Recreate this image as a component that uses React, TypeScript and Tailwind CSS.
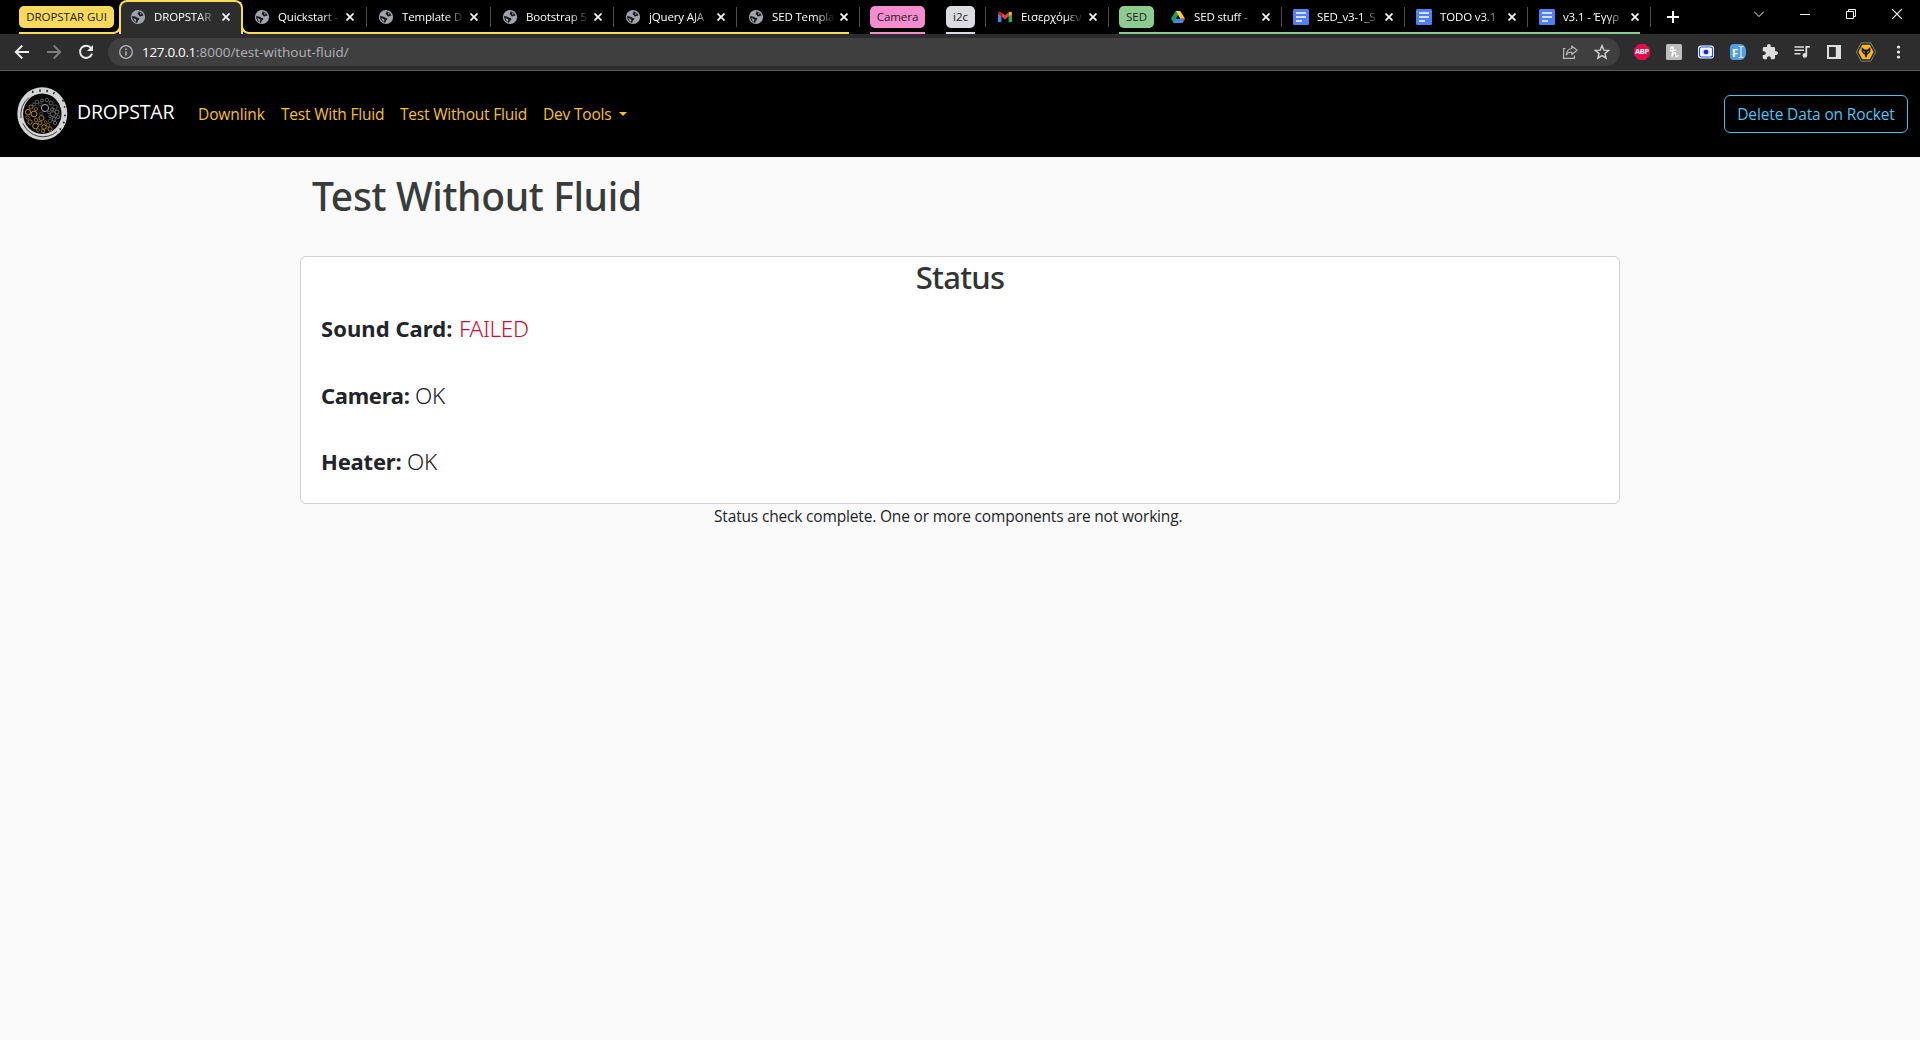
import type { ReactNode } from "react";

function Globe() {
  return (
    <svg viewBox="0 0 16 16" className="h-4 w-4 shrink-0">
      <circle cx="8" cy="8" r="7.1" fill="#a1a5ab" />
      <path d="M2.2 6.8 C3.6 7.8 5.4 7.3 6.6 8.2 C7.6 9.1 8.8 8.6 9.3 9.6 C9.6 10.6 8.3 11.3 7.6 12.2 L7.2 13.9 C4.2 13.5 1.8 10.6 2.2 6.8 Z" fill="#15161a" />
      <path d="M3.4 9.2 C5 9.100 6.200 10.200 6.500 11.100 L5.700 12.800 C4.500 12 3.600 10.800 3.400 9.200Z" fill="#a1a5ab" />
      <path d="M8.4 2.4 C10.6 2.6 12.6 4 13.4 6.2 C12.6 7.2 11.8 6.4 10.9 7.2 C9.8 7.9 8.7 7.1 9.1 6.1 C8.1 5.7 7.2 5.4 7.7 4.5 C8.8 4.3 8.1 3.3 8.4 2.4 Z" fill="#15161a" />
      <path d="M9.9 3.500 L12 5 L10.4 5.700 Z" fill="#a1a5ab" />
    </svg>
  );
}

function Gmail() {
  return (
    <svg viewBox="0 0 16 16" className="h-4 w-4 shrink-0">
      <path d="M1 4v8.3c0 .5.4.9.9.9h2.5V6.6Z" fill="#4285f4" />
      <path d="M15 4v8.3c0 .5-.4.9-.9.9h-2.5V6.6Z" fill="#34a853" />
      <path d="M11.6 3.6v4l3.4-2.5V4.2c0-1.5-1.7-1.9-2.5-1.3Z" fill="#fbbc04" />
      <path d="M4.4 7.6v-4L8 6.3l3.6-2.7v4L8 10.4Z" fill="#ea4335" />
      <path d="M1 4.2v.9l3.4 2.5v-4l-.9-.7C2.600 2.300 1 2.800 1 4.200Z" fill="#c5221f" />
    </svg>
  );
}

function Drive() {
  return (
    <svg viewBox="0 0 16 16" className="h-4 w-4 shrink-0">
      <path d="M5.600 2 L8.100 6.200 L3.700 14 L1 9.800Z" fill="#17a05d" />
      <path d="M5.600 2 H10.300 L15 9.800 H10.200Z" fill="#ffcd40" />
      <path d="M5.400 9.800 H15 L12.600 14 H3.300Z" fill="#4587f4" />
      <path d="M12.200 9.800 H15 L13.600 12.300Z" fill="#ea4335" />
      <path d="M8.100 6.200 L10.200 9.800 H6Z" fill="#0b0b0b" />
    </svg>
  );
}

function Docs() {
  return (
    <svg viewBox="0 0 16 16" className="h-4 w-4 shrink-0">
      <rect width="16" height="16" rx="1.500" fill="#4f80f5" />
      <path d="M3 4h10M3 8h10M3 12h6" stroke="#fff" strokeWidth="1.700" />
    </svg>
  );
}

function TabBody({ icon, title }: { icon: ReactNode; title: string }) {
  return (
    <>
      {icon}
      <span className="ml-2 w-[62px] overflow-hidden whitespace-nowrap text-[11.5px] leading-4 tracking-[-0.15px] text-white [mask-image:linear-gradient(to_right,black_44px,transparent_63px)]">
        {title}
      </span>
      <svg viewBox="0 0 8 8" className="ml-1.5 h-2 w-2 shrink-0">
        <path d="M0.500 0.500 7.500 7.500M7.500 0.500 0.500 7.500" stroke="#f4f4f4" strokeWidth="1.800" />
      </svg>
    </>
  );
}

function Separator() {
  return <span className="h-5 w-px shrink-0 bg-[#4c4c4c]" />;
}

function Tab({ icon, title, sep = true, wide = false }: { icon: ReactNode; title: string; sep?: boolean; wide?: boolean }) {
  return (
    <div className={`flex h-[34px] shrink-0 items-center ${wide ? "w-[124px]" : "w-[123px]"}`}>
      {sep ? <Separator /> : <span className="w-px" />}
      <span className="w-[11px] shrink-0" />
      <TabBody icon={icon} title={title} />
    </div>
  );
}

function Chip({ label, className }: { label: string; className: string }) {
  return (
    <span className={`flex h-[22px] shrink-0 items-center justify-center rounded-[5px] text-[11.5px] leading-4 tracking-[-0.05px] text-[#202124] ${className}`}>
      {label}
    </span>
  );
}

function TabStrip() {
  return (
    <div className="flex h-[34px] bg-black pl-[19px]">
      <div className="flex w-[100px] shrink-0 flex-col">
        <div className="flex h-8 items-start pt-1.5">
          <Chip label="DROPSTAR GUI" className="w-[95px] bg-[#f9d95c]" />
        </div>
        <div className="h-0.5 w-[95px] bg-[#f9dc5c]" />
      </div>

      <div className="relative z-10 -mr-px flex h-[34px] w-[124px] shrink-0 items-center rounded-t-lg border-2 border-b-0 border-[#f9dc5c] bg-[#2d2d2d] pb-0.5 pl-[9px]">
        <span className="absolute -left-2 bottom-0 h-2 w-2 rounded-br-lg border-b-2 border-r-2 border-[#f9dc5c]" />
        <span className="absolute -right-2 bottom-0 h-2 w-2 rounded-bl-lg border-b-2 border-l-2 border-[#f9dc5c]" />
        <TabBody icon={<Globe />} title="DROPSTAR" />
      </div>

      <div className="flex shrink-0 flex-col">
        <div className="flex h-8">
          <Tab icon={<Globe />} title="Quickstart -" sep={false} wide />
          <Tab icon={<Globe />} title="Template D" wide />
          <Tab icon={<Globe />} title="Bootstrap 5" />
          <Tab icon={<Globe />} title="jQuery AJA" />
          <Tab icon={<Globe />} title="SED Templa" />
        </div>
        <div className="ml-1.5 mr-2.5 h-0.5 bg-[#f9dc5c]" />
      </div>

      <div className="flex h-[34px] shrink-0">
        <div className="flex items-center"><Separator /></div>
        <div className="ml-2.5 flex flex-col justify-between pt-1.5">
          <Chip label="Camera" className="w-[55px] bg-[#f68cd0]" />
          <div className="h-0.5 bg-[#f68cd0]" />
        </div>
        <div className="ml-[21px] mr-2.5 flex flex-col justify-between pt-1.5">
          <Chip label="i2c" className="w-[29px] bg-[#dadce0]" />
          <div className="h-0.5 bg-[#dadce0]" />
        </div>
        <Tab icon={<Gmail />} title="Εισερχόμεν" />
        <div className="flex items-center"><Separator /></div>
      </div>

      <div className="ml-2.5 flex shrink-0 flex-col">
        <div className="flex h-8">
          <div className="flex w-[39px] items-start pt-1.5">
            <Chip label="SED" className="w-[35px] bg-[#8ccd8f]" />
          </div>
          <Tab icon={<Drive />} title="SED stuff -" sep={false} />
          <Tab icon={<Docs />} title="SED_v3-1_S" />
          <Tab icon={<Docs />} title="TODO v3.1" />
          <Tab icon={<Docs />} title="v3.1 - Έγγρ" />
        </div>
        <div className="mr-2.5 h-0.5 bg-[#85d090]" />
      </div>
      <div className="flex h-[34px] items-center"><Separator /></div>
      <svg viewBox="0 0 12 12" className="ml-4 mt-[11px] h-3 w-3 shrink-0">
        <path d="M6 0v12M0 6h12" stroke="#fff" strokeWidth="2" />
      </svg>

      <div className="ml-auto mr-[18px] mt-1.5 flex h-4 items-center gap-[36px] text-[#f4f4f4]">
        <svg viewBox="0 0 10 10" className="h-2.5 w-2.5"><path d="M0 2.500 5 7.500 10 2.500" fill="none" stroke="currentColor" /></svg>
        <svg viewBox="0 0 10 10" className="h-2.5 w-2.5"><path d="M0 5.500h10" stroke="currentColor" /></svg>
        <svg viewBox="0 0 10 10" className="h-2.5 w-2.5 overflow-visible"><path d="M0.500 2.500h7v7h-7zM2.500 2.500v-2h7v7h-2" fill="none" stroke="currentColor" /></svg>
        <svg viewBox="0 0 10 10" className="h-2.5 w-2.5"><path d="M0 0 10 10M10 0 0 10" stroke="currentColor" strokeWidth="1.200" /></svg>
      </div>
    </div>
  );
}

function Toolbar() {
  return (
    <div className="flex h-[37px] items-center border-b border-[#5b5b5b] bg-[#2d2d2d] pl-3.5">
      <svg viewBox="0 0 16 16" className="h-4 w-4" fill="none" stroke="#ececec" strokeWidth="1.900"><path d="M15 8H2M8.300 1.500 1.800 8l6.500 6.500" /></svg>
      <svg viewBox="0 0 16 16" className="ml-4 h-4 w-4" fill="none" stroke="#7d7d7d" strokeWidth="1.900"><path d="M1 8h13M7.700 1.500 14.200 8l-6.500 6.500" /></svg>
      <svg viewBox="0 0 16 16" className="ml-4 h-4 w-4">
        <path d="M13.100 4.200A6.100 6.100 0 1 0 14 9.600" fill="none" stroke="#ececec" strokeWidth="1.900" />
        <path d="M15 1v6H9Z" fill="#ececec" />
      </svg>
      <div className="ml-[14px] flex h-7 w-[1512px] shrink-0 items-center rounded-full bg-[#3f3f3f] pl-[11px]">
        <svg viewBox="0 0 14 14" className="h-3.5 w-3.5">
          <circle cx="7" cy="7" r="6.300" fill="none" stroke="#b4b7bb" strokeWidth="1.300" />
          <path d="M7 6.200v4.300M7 3.400v1.500" stroke="#b4b7bb" strokeWidth="1.500" />
        </svg>
        <span className="ml-[9px] whitespace-nowrap text-[13.5px] leading-5 text-[#b0b3b6]">
          <span className="tracking-[-0.33px] text-white">127.0.0.1</span>:8000/test-without-fluid/
        </span>
        <svg viewBox="0 0 16 16" className="ml-auto h-4 w-4" fill="none" stroke="#b8b8b8" strokeWidth="1.200">
          <path d="M3.500 4.500H1.600V14.400H12.400V11.500" />
          <path d="M9.800 2 15 6.300 9.800 10.500V8.200C7.400 8.100 5.600 8.900 4.300 10.800 4.700 7.200 6.600 4.900 9.800 4.500Z" strokeLinejoin="round" />
        </svg>
        <svg viewBox="0 0 16 16" className="ml-4 mr-[10px] h-4 w-4" fill="none" stroke="#cfcfcf" strokeWidth="1.400">
          <path d="M8 1.600 9.800 6.100 14.600 6.400 10.900 9.500 12.100 14.200 8 11.600 3.900 14.200 5.100 9.500 1.400 6.400 6.200 6.100Z" />
        </svg>
      </div>

      <div className="ml-3.5 flex items-center gap-4">
        <span className="flex h-4 w-4 items-center justify-center bg-[#e40d49] text-[7.5px] font-bold leading-none tracking-[-0.3px] text-white [clip-path:polygon(30%_0,70%_0,100%_30%,100%_70%,70%_100%,30%_100%,0_70%,0_30%)]">ABP</span>
        <svg viewBox="0 0 16 16" className="h-4 w-4">
          <rect width="16" height="16" rx="1.500" fill="#bdbdbd" />
          <path d="M4.500 5C5.200 2.700 7.600 2.200 7.200 4.400 6.900 6.800 6 9.500 6 12.800 6.500 9.800 7.900 8.100 9.200 8.700 10.200 9.300 8.900 11.800 10.100 12.600 10.900 13 11.600 12.300 11.900 11.700M4.200 6.600C6 7.100 8 6.900 9.600 6" fill="none" stroke="#fff" strokeWidth="1.300" strokeLinecap="round" />
        </svg>
        <svg viewBox="0 0 16 16" className="h-4 w-4">
          <rect y="1.500" width="16" height="13" rx="3" fill="#fff" />
          <rect x="1.500" y="3" width="13" height="10" rx="2" fill="none" stroke="#1552f0" strokeWidth="1.200" />
          <ellipse cx="8" cy="8" rx="4.200" ry="3" fill="#cfdcff" />
          <circle cx="8" cy="8" r="2.300" fill="#2020d0" />
        </svg>
        <span className="flex h-4 w-4 items-center rounded-l-sm rounded-r-md bg-[#4f9fe8] pl-0.5 text-[11px] font-bold leading-none text-white">
          F
          <svg viewBox="0 0 6 14" className="h-3.5 w-1.5"><path d="M0.500 1.500H2L3 2.300 4 1.500H5.500M3 2.300V11.700M0.500 12.500H2L3 11.700 4 12.500H5.500" fill="none" stroke="#fff" /></svg>
        </span>
        <svg viewBox="1 1 22 22" className="h-4 w-4" fill="#dedede"><path d="M20.500 11H19V7c0-1.100-.9-2-2-2h-4V3.500C13 2.120 11.880 1 10.500 1S8 2.120 8 3.500V5H4c-1.100 0-1.990.9-1.990 2v3.800H3.500c1.490 0 2.700 1.210 2.700 2.700s-1.210 2.700-2.700 2.700H2V20c0 1.100.9 2 2 2h3.800v-1.500c0-1.490 1.210-2.700 2.700-2.700s2.700 1.210 2.700 2.700V22H17c1.100 0 2-.9 2-2v-4h1.500c1.380 0 2.500-1.120 2.500-2.500S21.880 11 20.500 11z" /></svg>
        <svg viewBox="0 0 16 16" className="h-4 w-4">
          <path d="M0.500 3H10M0.500 6.300H10M0.500 9.700H6.500" stroke="#dedede" strokeWidth="1.600" />
          <path d="M12.300 11.200V2.800H15.800" fill="none" stroke="#dedede" strokeWidth="1.700" />
          <circle cx="10.800" cy="11.400" r="2.300" fill="#dedede" />
        </svg>
        <svg viewBox="0 0 16 16" className="h-4 w-4">
          <rect x="1" y="1" width="14" height="14" fill="#dedede" />
          <rect x="3.300" y="3.300" width="6" height="9.400" fill="#2d2d2d" stroke="#111" strokeWidth="0.600" />
        </svg>
        <svg viewBox="0 0 20 20" className="-mx-0.5 h-5 w-5">
          <path d="M5.200 0.900H14.800L19.600 10 14.800 19.100H5.200L0.400 10Z" fill="#1c1c1c" stroke="#8f8f8f" strokeWidth="0.900" />
          <path d="M6.200 2.800H13.800L17.600 10 13.800 17.200H6.200L2.400 10Z" fill="#fdb913" />
          <path d="M5.700 5 8.500 7.500H11.500L14.300 5 14.400 9.500 12.900 11.500 11.300 12.500 11 14.400 10 15.500 9 14.400 8.700 12.500 7.100 11.500 5.600 9.500Z" fill="#1d1a14" />
          <path d="M7.200 9.500 8.900 10.400M12.800 9.500 11.100 10.400" stroke="#fff" strokeWidth="0.700" />
        </svg>
        <svg viewBox="0 0 16 16" className="h-4 w-4" fill="#ececec">
          <circle cx="8.500" cy="3" r="1.600" /><circle cx="8.500" cy="8" r="1.600" /><circle cx="8.500" cy="13" r="1.600" />
        </svg>
      </div>
    </div>
  );
}

const bubbles: [number, number, number, string][] = [
  [28, 21, 3.6, "#cfcfcf"], [20, 15, 1.8, "#666"], [25, 13.500, 1.500, "#777"], [30, 13, 1.700, "#666"], [34, 16, 2, "#777"],
  [38, 20, 2.200, "#666"], [35, 22.500, 1.600, "#888"], [40, 25, 2, "#888"], [36, 27, 2.400, "#777"], [41, 30, 1.600, "#777"],
  [37, 32, 2, "#888"], [33, 29.500, 1.400, "#666"], [32, 25.500, 1.300, "#666"], [23, 17.500, 1.600, "#555"], [17, 17.500, 1.500, "#666"],
  [38, 36, 1.700, "#777"], [33, 34, 1.600, "#555"], [14, 20, 2, "#b8860f"], [19, 22, 1.700, "#8a6715"], [11, 25, 2.600, "#d9a21b"],
  [17, 27, 2.900, "#e6ab1c"], [10.500, 30.500, 1.700, "#a87a14"], [13, 35, 2.200, "#c9951a"], [19, 33, 1.800, "#a87a14"], [24.500, 31, 2.500, "#c9951a"],
  [23, 36, 1.900, "#b8860f"], [18.500, 39, 2.800, "#e6ab1c"], [27, 40, 2.300, "#d9a21b"], [31, 38, 1.600, "#8a6715"], [26, 44, 1.800, "#b8860f"],
  [33, 42, 2.100, "#c9951a"], [28.500, 35, 1.400, "#8a6715"], [21, 43, 1.400, "#8a6715"], [24, 26.500, 1.500, "#555"],
];

function Logo() {
  return (
    <svg viewBox="0 0 51 54" className="h-[54px] w-[51px] shrink-0">
      <ellipse cx="25.300" cy="26.700" rx="25" ry="26.400" fill="#d3d4d4" />
      <ellipse cx="25.300" cy="26.700" rx="19.200" ry="20.200" fill="#060606" />
      <path d="M12 10.500A22 23 0 0 0 4 31M6 36.500A22 23 0 0 0 40 44.500" fill="none" stroke="#2b2b2b" strokeWidth="0.900" />
      <path d="M15.800 3.800 15.600 6M23 2.600V4.800M30.300 2.900 30 5.200M37.500 5.200 36.300 7.200M45.300 13 46.600 14.400M47 19.500 48.200 20.500M47.500 27.800 48.500 29.200M46 35 47.500 36.200M42.500 41.500 44 42.600" stroke="#222" strokeWidth="1.500" />
      {bubbles.map(([cx, cy, r, color], i) => (
        <circle key={i} cx={cx} cy={cy} r={r} fill="none" stroke={color} strokeWidth="0.800" />
      ))}
    </svg>
  );
}

function Navbar() {
  return (
    <nav className="flex h-[86px] items-center bg-black pl-[17px] pr-3">
      <Logo />
      <span className="ml-[9px] w-[121px] pb-1 text-[19.5px] leading-6 tracking-[-0.2px] text-white">DROPSTAR</span>
      <div className="flex items-center text-[15.5px] leading-6 text-[#f9c022]">
        <a className="w-[82px] tracking-[-0.1px]">Downlink</a>
        <a className="w-[119px] pl-px tracking-[-0.2px]">Test With Fluid</a>
        <a className="w-[143px] pl-px tracking-[-0.2px]">Test Without Fluid</a>
        <a className="flex items-center whitespace-nowrap pl-px tracking-[-0.2px]">
          Dev Tools
          <span className="ml-2 border-x-4 border-t-4 border-x-transparent border-t-[#f9c022]" />
        </a>
      </div>
      <button className="ml-auto flex h-[38px] w-[184px] items-center justify-center whitespace-nowrap rounded-md border border-[#4cc0ee] text-[15.5px] leading-6 tracking-[-0.14px] text-[#4cc4f2]">
        Delete Data on Rocket
      </button>
    </nav>
  );
}

const checks = [
  { label: "Sound Card:", value: "FAILED", color: "text-[#cc1030]", labelStyle: "w-[138px] tracking-[0.05px]" },
  { label: "Camera:", value: "OK", color: "text-[#1c2024]", labelStyle: "w-[94px] tracking-[-0.3px]" },
  { label: "Heater:", value: "OK", color: "text-[#1c2024]", labelStyle: "w-[86px] tracking-[-0.2px]" },
];

export default function App() {
  return (
    <div className="flex h-[1040px] w-[1920px] flex-col overflow-hidden bg-[#fafafa] font-['Open_Sans','Noto_Sans',sans-serif]">
      <TabStrip />
      <Toolbar />
      <Navbar />
      <main className="mx-auto w-[1320px]">
        <h1 className="pl-3 pt-[15px] font-['Noto_Sans',sans-serif] text-[39px] font-medium leading-[48px] tracking-[-0.34px] text-[#373b3a]">Test Without Fluid</h1>
        <section className="mt-9 h-[248px] rounded-md border border-[#d2d2d2] bg-white px-5 pt-px">
          <h2 className="text-center font-['Noto_Sans',sans-serif] text-[31px] font-medium leading-[38px] tracking-[-0.75px] text-[#303433]">Status</h2>
          <div className="mt-[17px] flex flex-col gap-[36.500px]">
            {checks.map((c) => (
              <p key={c.label} className="flex items-baseline whitespace-nowrap font-['Noto_Sans',sans-serif] text-[22px] leading-[30px] text-[#212529]">
                <strong className={c.labelStyle}>{c.label}</strong>
                <span className={`text-[22.500px] font-[350] leading-[29px] tracking-[-0.35px] ${c.color}`}>{c.value}</span>
              </p>
            ))}
          </div>
        </section>
        <p className="ml-[414px] text-[15.500px] leading-6 tracking-[-0.17px] text-[#212529]">
          Status check complete. One or more components are not working.
        </p>
      </main>
    </div>
  );
}
